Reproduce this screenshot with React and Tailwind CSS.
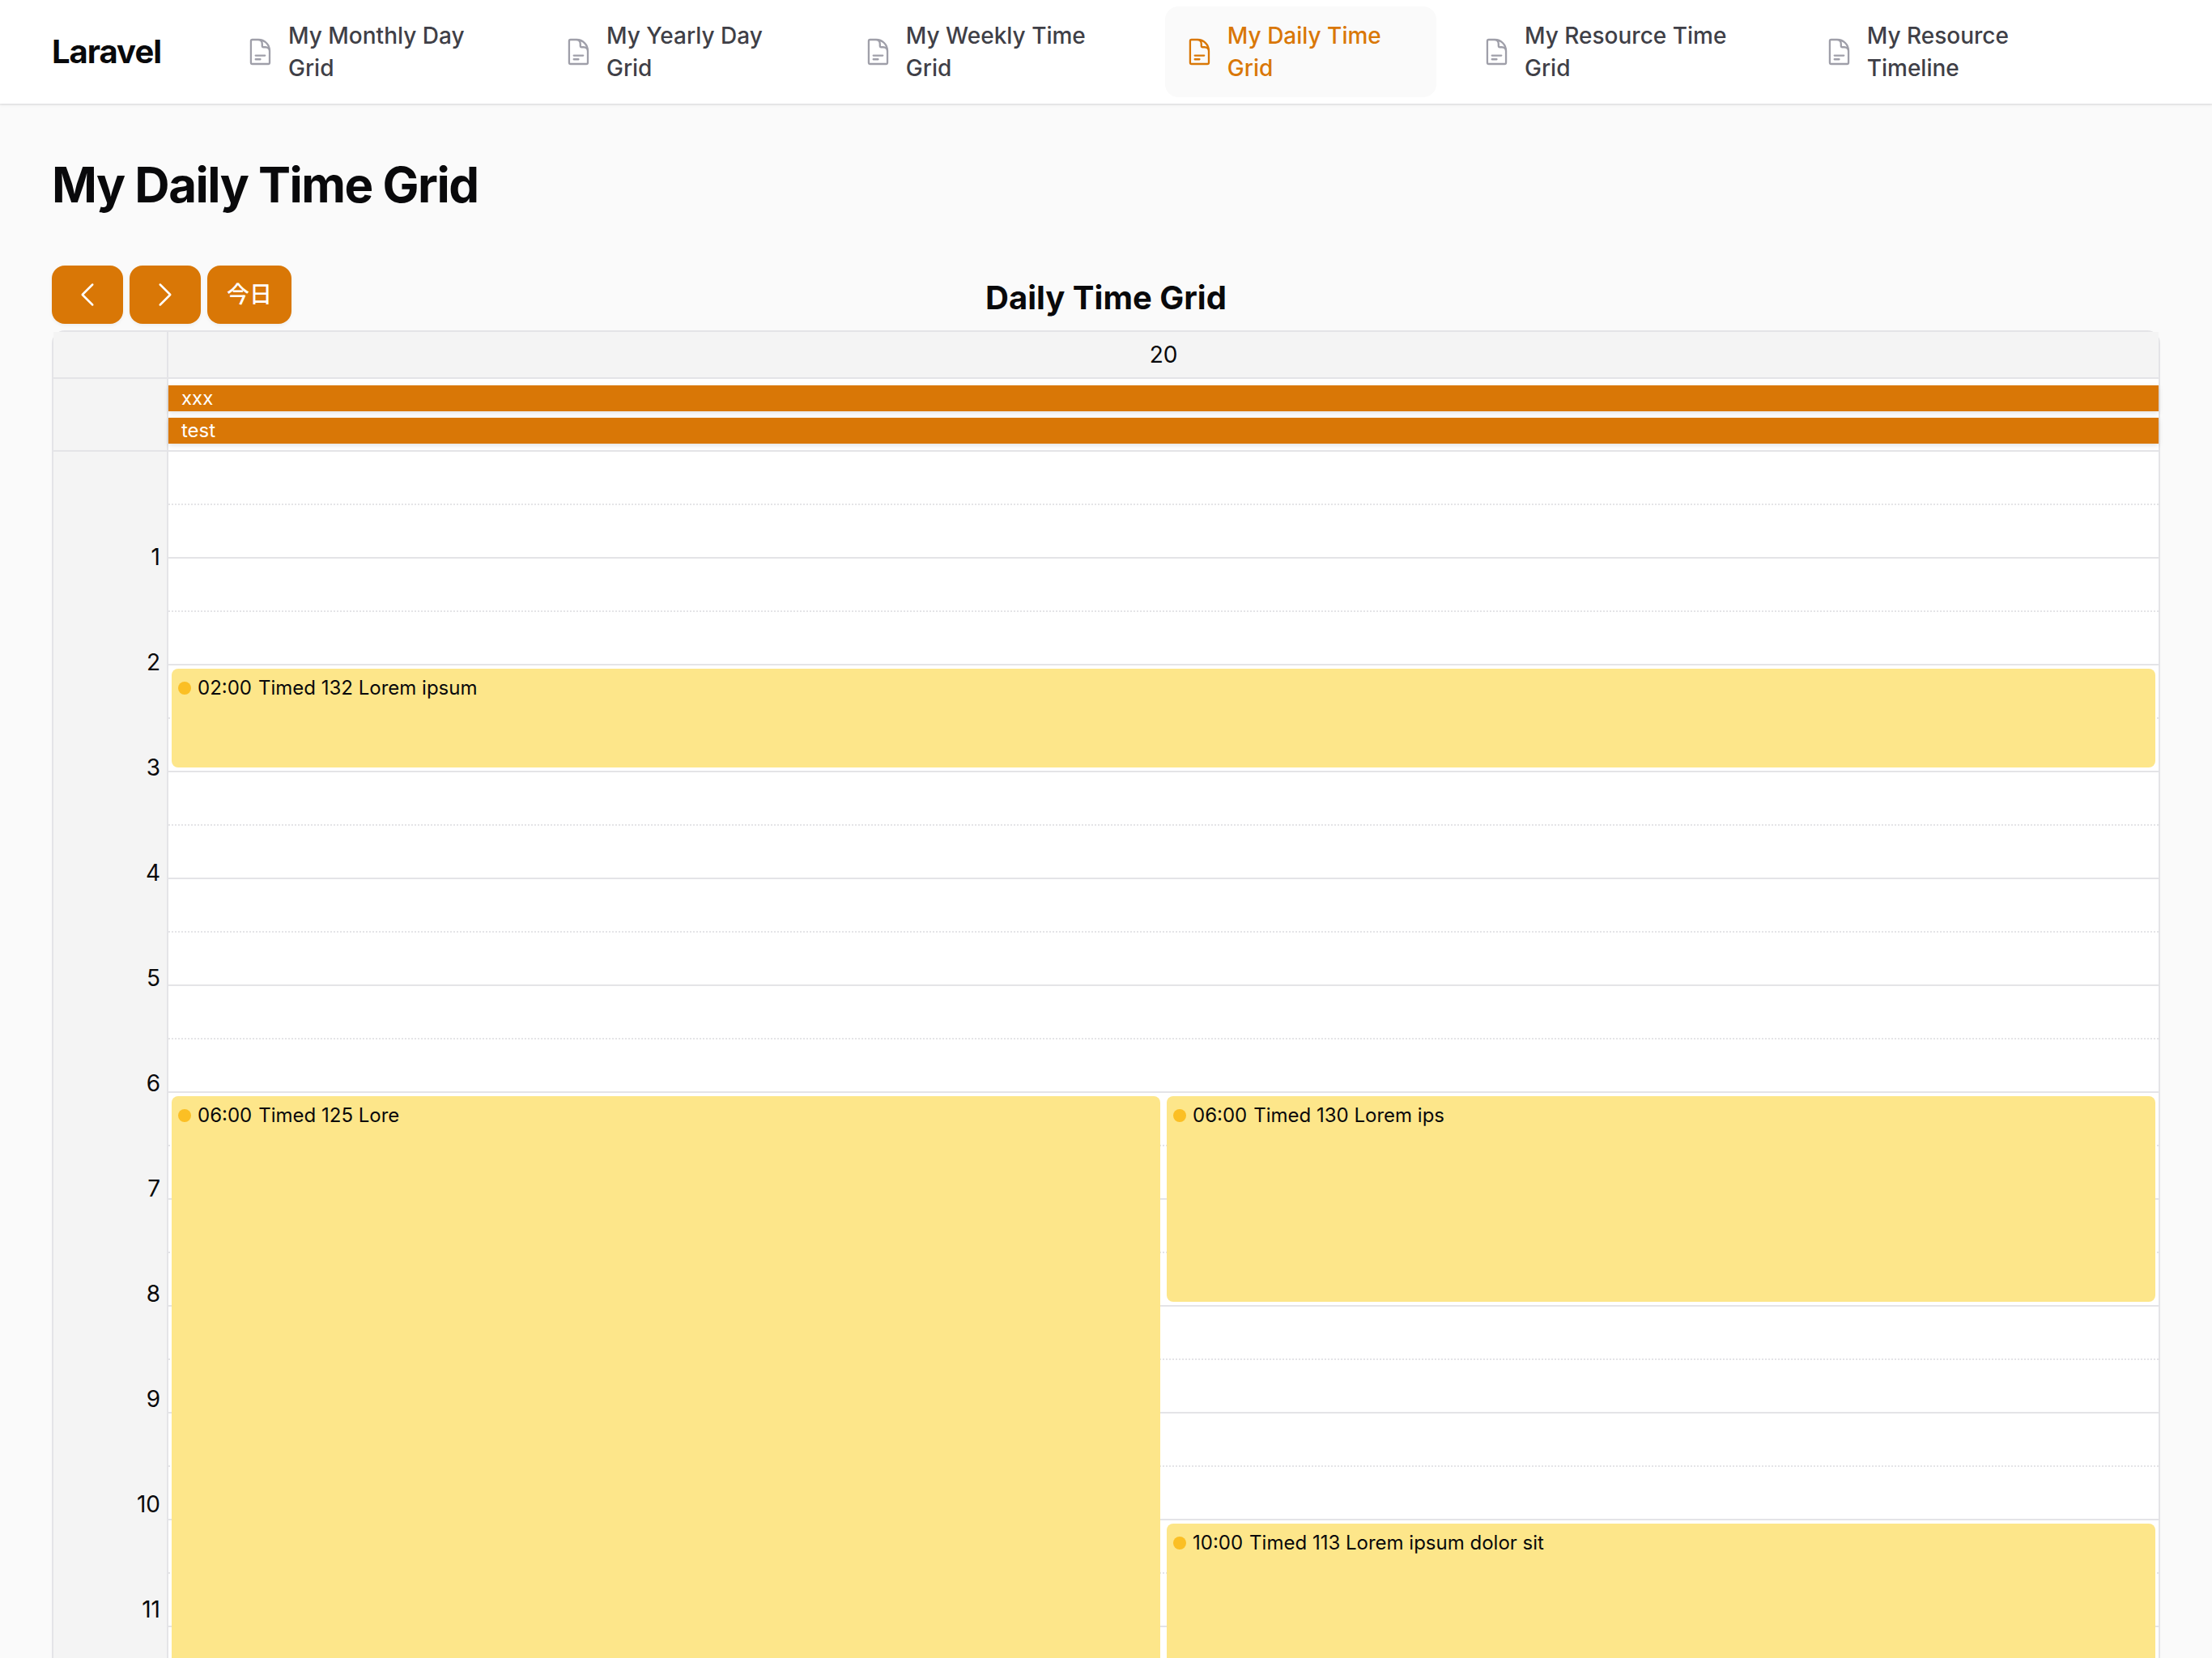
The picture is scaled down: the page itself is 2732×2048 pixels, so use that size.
import React from "react";

const navItems = [
  { label: "My Monthly Day Grid" },
  { label: "My Yearly Day Grid" },
  { label: "My Weekly Time Grid" },
  { label: "My Daily Time Grid", active: true },
  { label: "My Resource Time Grid" },
  { label: "My Resource Timeline" },
];

const hours = Array.from({ length: 12 }, (_, hour) => hour);

const allDayEvents = ["xxx", "test"];

const timedEvents = [
  { time: "02:00", title: "Timed 132 Lorem ipsum", place: "col-span-2 row-start-5 row-end-7" },
  { time: "06:00", title: "Timed 125 Lore", place: "col-start-1 row-start-13 row-end-25" },
  { time: "06:00", title: "Timed 130 Lorem ips", place: "col-start-2 row-start-13 row-end-17" },
  { time: "10:00", title: "Timed 113 Lorem ipsum dolor sit", place: "col-start-2 row-start-21 row-end-25" },
];

function DocumentIcon({ className }) {
  return (
    <svg
      className={className}
      viewBox="0 0 24 24"
      fill="none"
      stroke="currentColor"
      strokeWidth="1.5"
      strokeLinecap="round"
      strokeLinejoin="round"
      aria-hidden="true"
    >
      <path d="M19.5 14.25v-2.625a3.375 3.375 0 0 0-3.375-3.375h-1.5A1.125 1.125 0 0 1 13.5 7.125v-1.5a3.375 3.375 0 0 0-3.375-3.375H8.25m0 12.75h7.5m-7.5 3H12M10.5 2.25H5.625c-.621 0-1.125.504-1.125 1.125v17.25c0 .621.504 1.125 1.125 1.125h12.75c.621 0 1.125-.504 1.125-1.125V11.25a9 9 0 0 0-9-9Z" />
    </svg>
  );
}

function Chevron({ d }) {
  return (
    <svg
      className="size-10"
      viewBox="0 0 24 24"
      fill="none"
      stroke="currentColor"
      strokeWidth="1.5"
      strokeLinecap="round"
      strokeLinejoin="round"
      aria-hidden="true"
    >
      <path d={d} />
    </svg>
  );
}

function ToolbarButton({ children, label }) {
  return (
    <button
      type="button"
      aria-label={label}
      className="flex items-center rounded-2xl bg-[#d97706] px-6 py-4 text-[28px] leading-10 font-medium text-white shadow-[0_2px_4px_rgba(0,0,0,0.05)]"
    >
      {children}
    </button>
  );
}

function TopBar() {
  return (
    <header className="relative z-10 bg-white shadow-[0_2px_4px_rgba(0,0,0,0.05)] ring-2 ring-zinc-950/5">
      <nav className="flex h-32 items-center px-16">
        <a href="#" className="mr-20 text-[40px] leading-10 font-bold tracking-tight">
          Laravel
        </a>
        <ul className="mr-16 flex items-center gap-x-8">
          {navItems.map((item) => (
            <li key={item.label}>
              <a
                href="#"
                aria-current={item.active ? "page" : undefined}
                className={
                  "flex items-center justify-center gap-x-4 rounded-2xl px-6 py-4 text-[28px] leading-10 font-medium " +
                  (item.active ? "bg-zinc-50 text-[#d97706]" : "text-zinc-700")
                }
              >
                <DocumentIcon className={"size-10 " + (item.active ? "text-[#d97706]" : "text-zinc-400")} />
                <span>{item.label}</span>
              </a>
            </li>
          ))}
        </ul>
      </nav>
    </header>
  );
}

function TimedEvent({ time, title, place }) {
  return (
    <article className={"m-1 mb-1.5 rounded-lg bg-[#fde68a] p-2 text-2xl " + place}>
      <div className="flex items-center gap-2">
        <span className="size-4 rounded-full bg-[#fbbf24]" />
        <time>{time}</time>
        <h3>{title}</h3>
      </div>
    </article>
  );
}

function DayCalendar() {
  return (
    <div className="mt-2 rounded-t-2xl border-2 border-zinc-200 text-[28px] leading-10">
      <div className="flex border-b-2 border-zinc-200 bg-[#f4f4f4]">
        <div className="w-[142px] border-r-2 border-zinc-200" />
        <div className="flex-1 py-2 text-center">20</div>
      </div>
      <div className="flex border-b-2 border-zinc-200 bg-white">
        <div className="w-[142px] border-r-2 border-zinc-200 bg-[#f4f4f4]" />
        <div className="flex flex-1 flex-col gap-2 py-2">
          {allDayEvents.map((title) => (
            <div key={title} className="bg-[#d97706] px-4 text-2xl text-white shadow-[0_2px_6px_rgba(0,0,0,0.12)]">
              {title}
            </div>
          ))}
        </div>
      </div>
      <div className="flex bg-white">
        <div className="w-[142px] border-r-2 border-zinc-200 bg-[#f4f4f4] pr-2 text-right">
          {hours.map((hour) => (
            <div
              key={hour}
              className={hour === 0 ? "h-[65px]" : "flex h-[130px] items-center justify-end"}
            >
              {hour === 0 ? null : hour}
            </div>
          ))}
        </div>
        <div className="relative flex-1">
          {hours.map((hour) => (
            <div key={hour}>
              <div className="h-[66px] border-b-2 border-dotted border-zinc-200" />
              <div className="h-[66px] border-b-2 border-zinc-200" />
            </div>
          ))}
          <div className="absolute inset-0 grid grid-cols-2 grid-rows-[repeat(24,66px)]">
            {timedEvents.map((event) => (
              <TimedEvent key={event.title} {...event} />
            ))}
          </div>
        </div>
      </div>
    </div>
  );
}

export default function App() {
  return (
    <div className="h-screen overflow-hidden bg-zinc-50 font-['Inter','Noto_Sans_CJK_JP',sans-serif] text-zinc-950">
      <TopBar />
      <main className="flex flex-col gap-16 px-16 py-16">
        <h1 className="text-6xl leading-[72px] font-bold tracking-tight">My Daily Time Grid</h1>
        <section>
          <div className="grid grid-cols-3 items-center">
            <div className="flex gap-2">
              <ToolbarButton label="前へ">
                <Chevron d="M15.75 19.5 8.25 12l7.5-7.5" />
              </ToolbarButton>
              <ToolbarButton label="次へ">
                <Chevron d="m8.25 4.5 7.5 7.5-7.5 7.5" />
              </ToolbarButton>
              <ToolbarButton>今日</ToolbarButton>
            </div>
            <h2 className="mt-2 text-center text-[40px] leading-[56px] font-bold">Daily Time Grid</h2>
          </div>
          <DayCalendar />
        </section>
      </main>
    </div>
  );
}
